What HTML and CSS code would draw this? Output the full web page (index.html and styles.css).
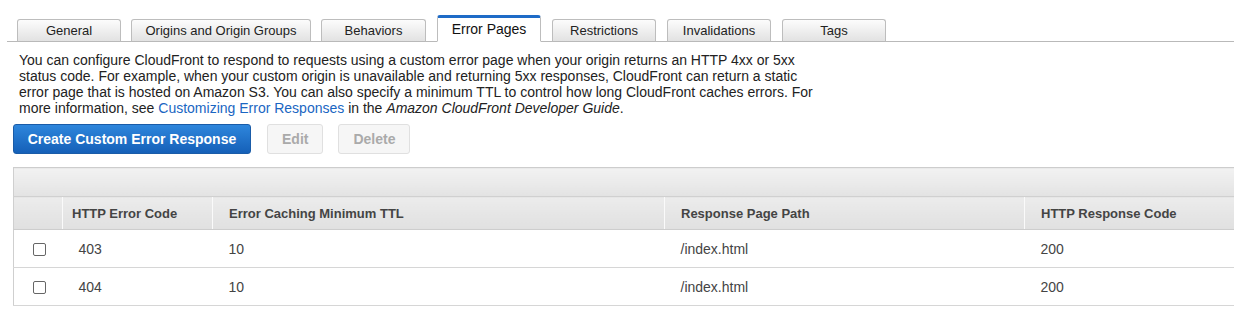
FILE: index.html
```html
<!DOCTYPE html>
<html lang="en">
<head>
    <meta charset="UTF-8">
    <title>Error Pages</title>
    <link rel="stylesheet" href="styles.css">
</head>
<body>
    <ul class="tabs">
        <li class="tab">General</li>
        <li class="tab tab-wide">Origins and Origin Groups</li>
        <li class="tab tab-behaviors">Behaviors</li>
        <li class="tab active">Error Pages</li>
        <li class="tab">Restrictions</li>
        <li class="tab">Invalidations</li>
        <li class="tab">Tags</li>
    </ul>
    <div class="panel">
        <p class="intro">You can configure CloudFront to respond to requests using a custom error page when your origin returns an HTTP 4xx or 5xx status code. For example, when your custom origin is unavailable and returning 5xx responses, CloudFront can return a static error page that is hosted on Amazon S3. You can also specify a minimum TTL to control how long CloudFront caches errors. For more information, see <a href="#">Customizing Error Responses</a> in the <em>Amazon CloudFront Developer Guide</em>.</p>
        <div class="actions">
            <button class="btn btn-primary">Create Custom Error Response</button>
            <button class="btn" disabled>Edit</button>
            <button class="btn" disabled>Delete</button>
        </div>
        <table class="grid">
            <thead>
                <tr class="toolbar"><th colspan="5"></th></tr>
                <tr class="columns">
                    <th class="col-check"></th>
                    <th class="col-code">HTTP Error Code</th>
                    <th class="col-ttl">Error Caching Minimum TTL</th>
                    <th class="col-path">Response Page Path</th>
                    <th>HTTP Response Code</th>
                </tr>
            </thead>
            <tbody id="rows"></tbody>
        </table>
    </div>
    <script>
        const responses = [
            { code: 403, ttl: 10, path: '/index.html', status: 200 },
            { code: 404, ttl: 10, path: '/index.html', status: 200 }
        ];

        const rows = document.getElementById('rows');
        responses.forEach((r) => {
            const tr = document.createElement('tr');
            tr.innerHTML = `<td class="cell-check"><input type="checkbox"></td>
                            <td class="cell-code">${r.code}</td>
                            <td>${r.ttl}</td>
                            <td>${r.path}</td>
                            <td>${r.status}</td>`;
            rows.appendChild(tr);
        });
    </script>
</body>
</html>
```

FILE: styles.css
```css
body {
    margin: 0;
    font-family: 'Liberation Sans', Arial, sans-serif;
    background: #fff;
    color: #222;
    overflow: hidden;
}
.tabs {
    display: flex;
    align-items: flex-end;
    gap: 11px;
    list-style: none;
    margin: 15px 0 0 7px;
    padding: 0 0 0 10px;
    border-bottom: 1px solid #b9b9b9;
    height: 26px;
}
.tab {
    box-sizing: border-box;
    width: 104px;
    height: 23px;
    margin-bottom: -1px;
    display: flex;
    align-items: center;
    justify-content: center;
    font-size: 13px;
    color: #222;
    background: linear-gradient(#fcfcfc, #e2e2e2);
    border: 1px solid #bdbdbd;
    border-bottom-color: #b9b9b9;
    border-radius: 3px 3px 0 0;
}
.tab-wide {
    width: 180px;
    margin: 0 -1px -1px -1px;
}
.tab-behaviors {
    width: 105px;
}
.tab.active {
    height: 27px;
    font-size: 14px;
    color: #111;
    background: #fff;
    border-top: 3px solid #1e6bc7;
    border-bottom-color: #fff;
    padding-bottom: 1px;
}
.panel {
    padding: 10px 0 0 13px;
}
.intro {
    margin: 0 0 8px 6px;
    width: 805px;
    font-size: 14px;
    line-height: 16px;
    color: #222;
}
.intro a {
    color: #1a66c2;
    text-decoration: none;
}
.actions {
    display: flex;
    gap: 15px;
    margin-bottom: 13px;
}
.btn {
    height: 30px;
    padding: 0 14px;
    font-family: inherit;
    font-size: 14px;
    font-weight: bold;
    white-space: nowrap;
    color: #aaa;
    background: #f6f6f6;
    border: 1px solid #e0e0e0;
    border-radius: 3px;
}
.btn-primary {
    width: 238px;
    margin-right: 1px;
    padding: 0;
    color: #fff;
    background: linear-gradient(#2e86dc, #1560b8);
    border-color: #1a5ca8;
}
.grid {
    width: 1240px;
    border-collapse: collapse;
    border-left: 1px solid #cfcfcf;
    font-size: 14px;
}
.grid th {
    text-align: left;
    font-size: 13px;
    font-weight: bold;
    color: #444;
    padding: 0 16px;
}
.toolbar th {
    height: 28px;
    padding: 0;
    background: linear-gradient(#f2f2f2, #e3e3e3);
    border-top: 1px solid #cdcdcd;
}
.columns th {
    height: 32px;
    background: linear-gradient(#ececec, #e0e0e0);
    border-top: 1px solid #d0d0d0;
    border-bottom: 1px solid #cdcdcd;
    border-left: 1px solid #fafafa;
}
.columns th:first-child {
    border-left: none;
}
.col-check {
    width: 49px;
    box-sizing: border-box;
}
.grid th.col-code {
    width: 150px;
    box-sizing: border-box;
    padding-left: 9px;
}
.col-ttl {
    width: 452px;
    box-sizing: border-box;
}
.col-path {
    width: 360px;
    box-sizing: border-box;
}
.grid td {
    height: 37px;
    padding: 0 16px;
    color: #444;
    border-bottom: 1px solid #d6d6d6;
}
.grid td.cell-check {
    padding: 0 0 0 19px;
}
.grid td.cell-code {
    padding-left: 16px;
}
.cell-check input {
    appearance: none;
    display: block;
    width: 13px;
    height: 13px;
    margin: 1px 0 0 0;
    border: 1px solid #666;
    border-radius: 2px;
    background: #fff;
}
```
